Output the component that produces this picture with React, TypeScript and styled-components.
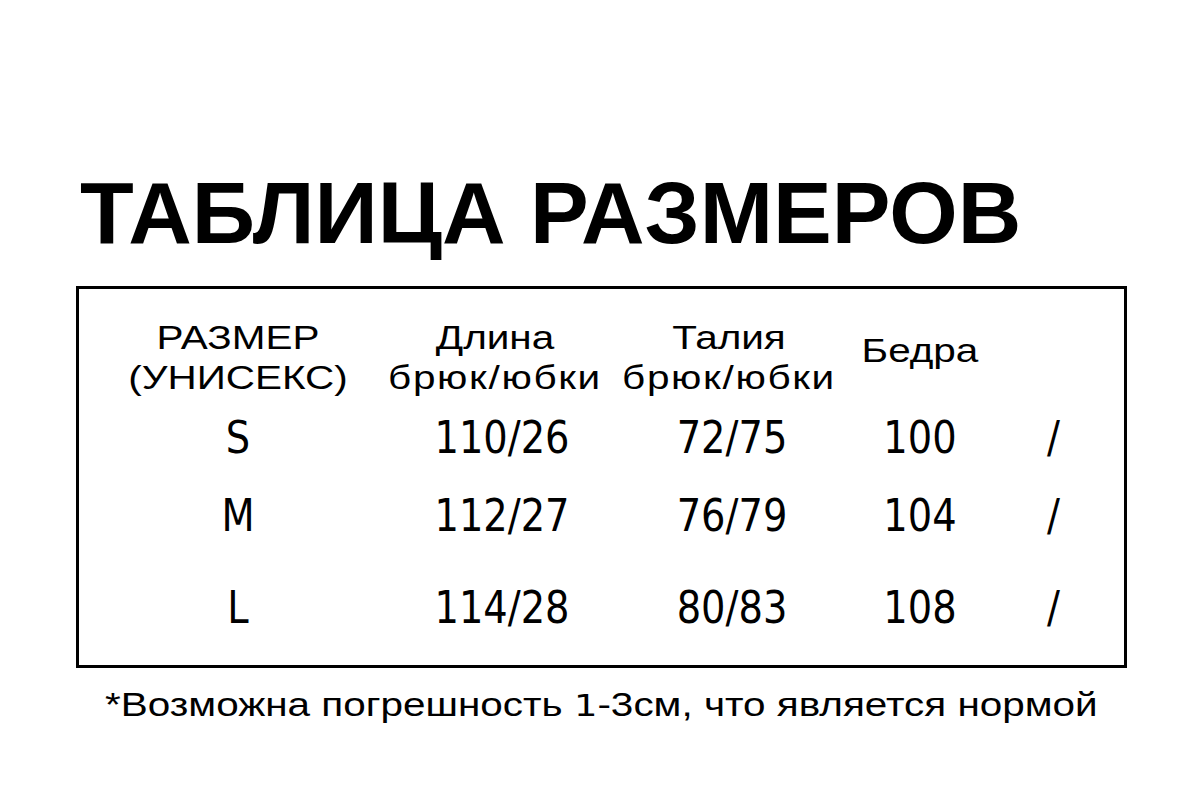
import styled, { createGlobalStyle } from "styled-components";

const GlobalStyle = createGlobalStyle`
  html, body {
    margin: 0;
    padding: 0;
    background: #ffffff;
  }
  body {
    width: 1200px;
    height: 808px;
    overflow: hidden;
  }
`;

const Page = styled.div`
  width: 1200px;
  height: 808px;
  display: flex;
  flex-direction: column;
  align-items: flex-start;
  padding: 163px 0 0 76px;
  box-sizing: border-box;
  color: #000;
`;

const Title = styled.h1`
  margin: 0 0 0 4px;
  font-family: "Liberation Sans", Arial, sans-serif;
  font-weight: 700;
  font-size: 88px;
  line-height: 100px;
  white-space: nowrap;
`;

const Box = styled.div`
  margin-top: 23px;
  width: 1051px;
  height: 382px;
  box-sizing: border-box;
  border: 3px solid #000;
  display: flex;
  flex-direction: column;
`;

const cols = "318px 210px 250px 126px 141px";

const HeadRow = styled.div`
  display: grid;
  grid-template-columns: ${cols};
  align-items: start;
  height: 119px;
  padding-top: 28px;
  box-sizing: border-box;
`;

const HeadCell = styled.div<{ $shift?: number; $drop?: number }>`
  font-family: "Liberation Sans", Arial, sans-serif;
  font-size: 34px;
  line-height: 40px;
  text-align: center;
  white-space: nowrap;
  margin-top: ${({ $drop }) => $drop ?? 0}px;
  transform: translateX(${({ $shift }) => $shift ?? 0}px) scaleX(1.19);
`;

const SubLine = styled.span`
  letter-spacing: 1.4px;
`;

const DataRow = styled.div<{ $gap: number }>`
  display: grid;
  grid-template-columns: ${cols};
  align-items: center;
  height: 60px;
  margin-top: ${({ $gap }) => $gap}px;
`;

const DataCell = styled.div`
  font-family: "DejaVu Sans Condensed", "DejaVu Sans", sans-serif;
  font-stretch: condensed;
  font-size: 44px;
  line-height: 60px;
  text-align: center;
  white-space: nowrap;
  transform: scaleX(0.97);
`;

const Note = styled.p`
  margin: 14px 0 0 29px;
  font-family: "Liberation Sans", Arial, sans-serif;
  font-size: 34px;
  line-height: 44px;
  white-space: nowrap;
  transform: scaleX(1.19);
  transform-origin: left center;
`;

const Digit = styled.span`
  font-family: "DejaVu Sans", sans-serif;
  font-size: 31px;
`;

const rows = [
  { size: "S", length: "110/26", waist: "72/75", hips: "100", gap: 0 },
  { size: "M", length: "112/27", waist: "76/79", hips: "104", gap: 18 },
  { size: "L", length: "114/28", waist: "80/83", hips: "108", gap: 32 },
];

export default function App() {
  return (
    <>
      <GlobalStyle />
      <Page>
        <Title>ТАБЛИЦА РАЗМЕРОВ</Title>
        <Box>
          <HeadRow>
            <HeadCell>
              РАЗМЕР
              <br />
              (УНИСЕКС)
            </HeadCell>
            <HeadCell $shift={-7}>
              Длина
              <br />
              <SubLine>брюк/юбки</SubLine>
            </HeadCell>
            <HeadCell $shift={-3}>
              Талия
              <br />
              <SubLine>брюк/юбки</SubLine>
            </HeadCell>
            <HeadCell $drop={13}>Бедра</HeadCell>
            <HeadCell />
          </HeadRow>
          {rows.map((r) => (
            <DataRow key={r.size} $gap={r.gap}>
              <DataCell>{r.size}</DataCell>
              <DataCell>{r.length}</DataCell>
              <DataCell>{r.waist}</DataCell>
              <DataCell>{r.hips}</DataCell>
              <DataCell>/</DataCell>
            </DataRow>
          ))}
        </Box>
        <Note>
          *Возможна погрешность <Digit>1</Digit>-3см, что является нормой
        </Note>
      </Page>
    </>
  );
}
